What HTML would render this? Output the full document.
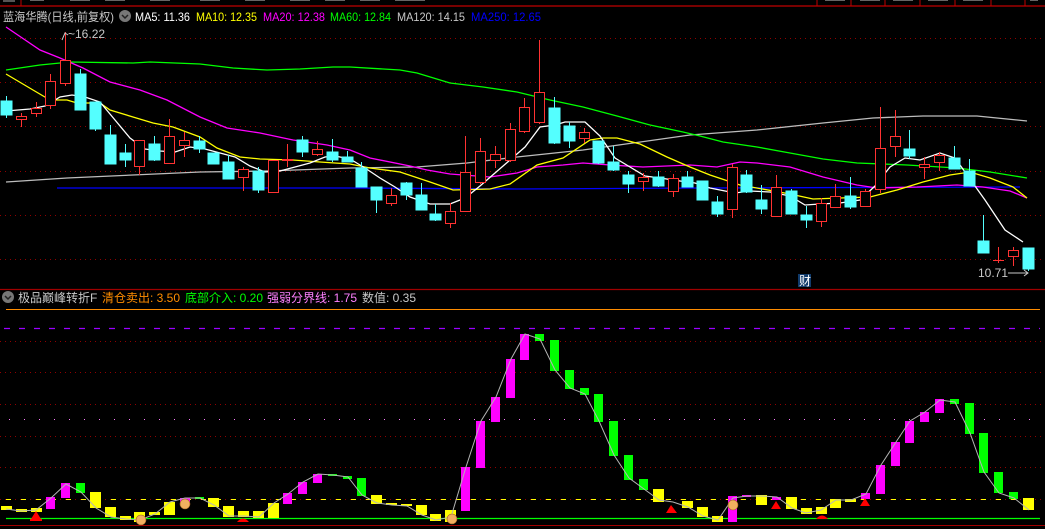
<!DOCTYPE html>
<html><head><meta charset="utf-8"><style>
html,body{margin:0;padding:0;background:#000;width:1045px;height:529px;overflow:hidden}
svg{display:block}
text{font-family:"Liberation Sans","Noto Sans CJK SC",sans-serif;font-size:12px}
</style></head><body>
<svg width="1045" height="529" xmlns="http://www.w3.org/2000/svg">
<rect width="1045" height="529" fill="#000"/>
<!-- top strip -->
<line x1="0" y1="6" x2="1045" y2="6" stroke="#c00000" stroke-width="1.2"/>
<line x1="21" y1="0" x2="21" y2="6" stroke="#c00000"/>
<rect x="3" y="0" width="12" height="2" fill="#555"/>
<g fill="#666"><rect x="30" y="0" width="14" height="1"/><rect x="70" y="0" width="20" height="1"/><rect x="105" y="0" width="20" height="1"/><rect x="150" y="0" width="20" height="1"/><rect x="200" y="0" width="20" height="1"/><rect x="245" y="0" width="20" height="1"/><rect x="290" y="0" width="20" height="1"/><rect x="325" y="0" width="20" height="1"/><rect x="360" y="0" width="20" height="1"/><rect x="395" y="0" width="30" height="1"/><rect x="825" y="0" width="20" height="1"/><rect x="860" y="0" width="20" height="1"/><rect x="893" y="0" width="20" height="1"/><rect x="928" y="0" width="20" height="1"/><rect x="963" y="0" width="20" height="1"/><rect x="1030" y="0" width="8" height="1"/></g>
<g stroke="#c00000"><line x1="817" y1="0" x2="817" y2="6"/><line x1="851" y1="0" x2="851" y2="6"/><line x1="885" y1="0" x2="885" y2="6"/><line x1="920" y1="0" x2="920" y2="6"/><line x1="955" y1="0" x2="955" y2="6"/><line x1="991" y1="0" x2="991" y2="6"/><line x1="1025" y1="0" x2="1025" y2="6"/></g>
<!-- header -->
<text x="3" y="21" fill="#c8c8c8" textLength="111" lengthAdjust="spacingAndGlyphs">蓝海华腾(日线,前复权)</text>
<circle cx="125" cy="16" r="6" fill="#777"/><path d="M122 15 l3 3 l3 -3" stroke="#222" stroke-width="1.5" fill="none"/>
<text x="135" y="21" fill="#fff" textLength="55" lengthAdjust="spacingAndGlyphs">MA5: 11.36</text>
<text x="196" y="21" fill="#ffff00" textLength="61" lengthAdjust="spacingAndGlyphs">MA10: 12.35</text>
<text x="263" y="21" fill="#ff00ff" textLength="62" lengthAdjust="spacingAndGlyphs">MA20: 12.38</text>
<text x="330" y="21" fill="#00ff00" textLength="61" lengthAdjust="spacingAndGlyphs">MA60: 12.84</text>
<text x="397" y="21" fill="#c8c8c8" textLength="68" lengthAdjust="spacingAndGlyphs">MA120: 14.15</text>
<text x="471" y="21" fill="#0000ff" textLength="70" lengthAdjust="spacingAndGlyphs">MA250: 12.65</text>
<!-- grid -->
<g stroke="#900000" stroke-dasharray="1,4">
<line x1="0" y1="38.5" x2="1045" y2="38.5"/><line x1="0" y1="82.5" x2="1045" y2="82.5"/><line x1="0" y1="126.5" x2="1045" y2="126.5"/><line x1="0" y1="171.5" x2="1045" y2="171.5"/><line x1="0" y1="215.5" x2="1045" y2="215.5"/><line x1="0" y1="259.5" x2="1045" y2="259.5"/>
</g>
<!-- MA lines -->
<g fill="none" stroke-width="1.3">
<polyline stroke="#0000ff" points="57,188 350,188 517,189 700,188 1020,187"/>
<polyline stroke="#bdbdbd" points="6,182 67,178 133,175 200,172 267,171 350,168 417,167 467,163 517,157 583,150 633,143 690,135 757,130 823,123 873,118 923,116 977,116 1027,121"/>
<polyline stroke="#00ff00" points="6,70 40,65 70,62 133,63 150,62 200,64 233,68 267,70 300,69 333,67 350,67 400,70 417,73 450,83 483,87 517,92 550,100 583,107 617,116 650,125 683,132 700,136 723,142 757,147 790,153 823,159 857,163 907,165 957,168 990,172 1027,178"/>
<polyline stroke="#ff00ff" points="6,27 40,50 60,58 83,68 110,82 140,90 167,100 200,117 227,128 260,133 293,140 327,145 350,150 370,158 410,166 427,170 450,174 490,177 517,173 537,167 563,165 583,163 610,165 643,167 690,165 717,167 740,162 757,163 790,167 823,177 857,185 877,188 917,187 957,185 983,187 1010,191 1027,198"/>
<polyline stroke="#ffff00" points="6,74 33,90 50,100 67,100 77,103 100,103 110,110 133,117 153,123 173,127 200,137 217,148 240,157 260,159 293,160 320,162 350,164 370,168 400,172 430,182 453,190 490,189 510,184 537,165 563,158 590,140 603,138 617,138 640,144 667,157 690,167 710,175 740,185 790,194 813,199 840,198 870,197 897,190 923,182 950,175 970,172 990,178 1013,187 1027,198"/>
<polyline stroke="#ffffff" points="6,111 30,109 45,106 60,97 72,95 85,97 100,102 115,120 130,138 145,149 160,151 175,152 190,147 205,149 220,153 235,157 250,166 265,172 280,171 295,167 310,163 325,157 335,156 350,159 365,168 380,178 395,187 410,197 430,204 450,204 465,198 480,186 495,173 510,160 525,147 540,127 555,125 565,122 585,122 600,136 615,158 630,167 645,176 660,178 680,181 695,183 710,188 720,190 735,193 750,191 770,192 790,196 805,205 820,204 840,203 860,200 875,186 890,167 905,158 920,160 940,153 955,158 965,172 985,200 1005,230 1023,242"/>
</g>
<!-- candles: cyan -->
<g fill="#54ffff" stroke="#54ffff">
<line x1="6.5" y1="96" x2="6.5" y2="118"/><rect x="1" y="101" width="11" height="14"/>
<line x1="80.5" y1="69" x2="80.5" y2="110"/><rect x="75" y="74" width="11" height="36"/>
<line x1="95.5" y1="102" x2="95.5" y2="131"/><rect x="90" y="102" width="11" height="27"/>
<line x1="110.5" y1="125" x2="110.5" y2="164"/><rect x="105" y="135" width="11" height="29"/>
<line x1="125.5" y1="144" x2="125.5" y2="167"/><rect x="120" y="153" width="11" height="7"/>
<line x1="154.5" y1="136" x2="154.5" y2="161"/><rect x="149" y="144" width="11" height="16"/>
<line x1="199.5" y1="136" x2="199.5" y2="153"/><rect x="194" y="141" width="11" height="8"/>
<line x1="213.5" y1="153" x2="213.5" y2="164"/><rect x="208" y="153" width="11" height="11"/>
<line x1="228.5" y1="155" x2="228.5" y2="179"/><rect x="223" y="162" width="11" height="17"/>
<line x1="258.5" y1="167" x2="258.5" y2="193"/><rect x="253" y="171" width="11" height="19"/>
<line x1="302.5" y1="136" x2="302.5" y2="157"/><rect x="297" y="140" width="11" height="12"/>
<line x1="332.5" y1="139" x2="332.5" y2="162"/><rect x="327" y="152" width="11" height="8"/>
<line x1="347.5" y1="151" x2="347.5" y2="162"/><rect x="342" y="157" width="11" height="5"/>
<line x1="361.5" y1="162" x2="361.5" y2="187"/><rect x="356" y="168" width="11" height="19"/>
<line x1="376.5" y1="187" x2="376.5" y2="213"/><rect x="371" y="187" width="11" height="13"/>
<line x1="406.5" y1="182" x2="406.5" y2="200"/><rect x="401" y="183" width="11" height="12"/>
<line x1="421.5" y1="183" x2="421.5" y2="210"/><rect x="416" y="195" width="11" height="15"/>
<line x1="435.5" y1="204" x2="435.5" y2="221"/><rect x="430" y="214" width="11" height="6"/>
<line x1="554.5" y1="97" x2="554.5" y2="144"/><rect x="549" y="108" width="11" height="35"/>
<line x1="569.5" y1="122" x2="569.5" y2="148"/><rect x="564" y="126" width="11" height="15"/>
<line x1="598.5" y1="141" x2="598.5" y2="164"/><rect x="593" y="141" width="11" height="22"/>
<line x1="613.5" y1="146" x2="613.5" y2="171"/><rect x="608" y="162" width="11" height="8"/>
<line x1="628.5" y1="171" x2="628.5" y2="193"/><rect x="623" y="175" width="11" height="9"/>
<line x1="658.5" y1="171" x2="658.5" y2="187"/><rect x="653" y="177" width="11" height="9"/>
<line x1="687.5" y1="171" x2="687.5" y2="187"/><rect x="682" y="177" width="11" height="10"/>
<line x1="702.5" y1="181" x2="702.5" y2="200"/><rect x="697" y="181" width="11" height="19"/>
<line x1="717.5" y1="196" x2="717.5" y2="217"/><rect x="712" y="202" width="11" height="12"/>
<line x1="746.5" y1="170" x2="746.5" y2="193"/><rect x="741" y="175" width="11" height="17"/>
<line x1="761.5" y1="185" x2="761.5" y2="214"/><rect x="756" y="200" width="11" height="9"/>
<line x1="791.5" y1="189" x2="791.5" y2="214"/><rect x="786" y="191" width="11" height="23"/>
<line x1="806.5" y1="206" x2="806.5" y2="228"/><rect x="801" y="215" width="11" height="5"/>
<line x1="850.5" y1="177" x2="850.5" y2="209"/><rect x="845" y="196" width="11" height="11"/>
<line x1="909.5" y1="130" x2="909.5" y2="159"/><rect x="904" y="149" width="11" height="7"/>
<line x1="954.5" y1="146" x2="954.5" y2="169"/><rect x="949" y="158" width="11" height="11"/>
<line x1="969.5" y1="159" x2="969.5" y2="186"/><rect x="964" y="171" width="11" height="15"/>
<line x1="983.5" y1="215" x2="983.5" y2="253"/><rect x="978" y="241" width="11" height="12"/>
<line x1="1028.5" y1="248" x2="1028.5" y2="271"/><rect x="1023" y="248" width="11" height="21"/>
</g>
<!-- candles: red hollow -->
<g fill="#000" stroke="#ff3232" stroke-width="1">
<line x1="21.5" y1="113" x2="21.5" y2="127"/><rect x="16.5" y="116.5" width="10" height="3"/>
<line x1="36.5" y1="102" x2="36.5" y2="117"/><rect x="31.5" y="108.5" width="10" height="5"/>
<line x1="50.5" y1="74" x2="50.5" y2="109"/><rect x="45.5" y="81.5" width="10" height="24"/>
<line x1="65.5" y1="32" x2="65.5" y2="86"/><rect x="60.5" y="60.5" width="10" height="23"/>
<line x1="139.5" y1="140" x2="139.5" y2="175"/><rect x="134.5" y="140.5" width="10" height="26"/>
<line x1="169.5" y1="119" x2="169.5" y2="163"/><rect x="164.5" y="136.5" width="10" height="27"/>
<line x1="184.5" y1="132" x2="184.5" y2="157"/><rect x="179.5" y="140.5" width="10" height="5"/>
<line x1="243.5" y1="167" x2="243.5" y2="191"/><rect x="238.5" y="169.5" width="10" height="8"/>
<line x1="273.5" y1="160" x2="273.5" y2="193"/><rect x="268.5" y="160.5" width="10" height="32"/>
<line x1="287.5" y1="144" x2="287.5" y2="167"/><rect x="282.5" y="159.5" width="10" height="1"/>
<line x1="317.5" y1="141" x2="317.5" y2="156"/><rect x="312.5" y="149.5" width="10" height="5"/>
<line x1="391.5" y1="188" x2="391.5" y2="206"/><rect x="386.5" y="195.5" width="10" height="8"/>
<line x1="450.5" y1="203" x2="450.5" y2="228"/><rect x="445.5" y="211.5" width="10" height="12"/>
<line x1="465.5" y1="136" x2="465.5" y2="211"/><rect x="460.5" y="172.5" width="10" height="39"/>
<line x1="480.5" y1="138" x2="480.5" y2="184"/><rect x="475.5" y="151.5" width="10" height="31"/>
<line x1="495.5" y1="146" x2="495.5" y2="168"/><rect x="490.5" y="154.5" width="10" height="6"/>
<line x1="510.5" y1="123" x2="510.5" y2="162"/><rect x="505.5" y="129.5" width="10" height="31"/>
<line x1="524.5" y1="98" x2="524.5" y2="133"/><rect x="519.5" y="107.5" width="10" height="24"/>
<line x1="539.5" y1="40" x2="539.5" y2="124"/><rect x="534.5" y="92.5" width="10" height="30"/>
<line x1="584.5" y1="128" x2="584.5" y2="143"/><rect x="579.5" y="132.5" width="10" height="6"/>
<line x1="643.5" y1="173" x2="643.5" y2="191"/><rect x="638.5" y="177.5" width="10" height="4"/>
<line x1="673.5" y1="174" x2="673.5" y2="197"/><rect x="668.5" y="178.5" width="10" height="13"/>
<line x1="732.5" y1="164" x2="732.5" y2="218"/><rect x="727.5" y="167.5" width="10" height="42"/>
<line x1="776.5" y1="175" x2="776.5" y2="216"/><rect x="771.5" y="187.5" width="10" height="29"/>
<line x1="821.5" y1="198" x2="821.5" y2="227"/><rect x="816.5" y="203.5" width="10" height="18"/>
<line x1="835.5" y1="184" x2="835.5" y2="207"/><rect x="830.5" y="196.5" width="10" height="11"/>
<line x1="865.5" y1="189" x2="865.5" y2="206"/><rect x="860.5" y="191.5" width="10" height="15"/>
<line x1="880.5" y1="107" x2="880.5" y2="193"/><rect x="875.5" y="148.5" width="10" height="41"/>
<line x1="895.5" y1="110" x2="895.5" y2="157"/><rect x="890.5" y="136.5" width="10" height="10"/>
<line x1="924.5" y1="157" x2="924.5" y2="179"/><rect x="919.5" y="164.5" width="10" height="3"/>
<line x1="939.5" y1="152" x2="939.5" y2="171"/><rect x="934.5" y="155.5" width="10" height="7"/>
<line x1="998.5" y1="247" x2="998.5" y2="263"/><line x1="993" y1="260.5" x2="1004" y2="260.5"/>
<line x1="1013.5" y1="247" x2="1013.5" y2="266"/><rect x="1008.5" y="250.5" width="10" height="6"/>
</g>
<!-- labels -->
<path d="M62 40 l3 -7 l3 2" stroke="#c8c8c8" fill="none"/>
<text x="68" y="38" fill="#c8c8c8">~16.22</text>
<text x="978" y="277" fill="#c8c8c8">10.71</text>
<path d="M1008 273 h20 m-4 -3 l4 3 l-4 3" stroke="#c8c8c8" fill="none"/>
<rect x="798" y="274" width="13" height="13" fill="#103a6a"/>
<text x="799" y="285" fill="#fff" font-size="11">财</text>
<!-- divider -->
<line x1="0" y1="289.5" x2="1045" y2="289.5" stroke="#a00000" stroke-width="1.2"/>
<!-- lower header -->
<circle cx="8" cy="297" r="6" fill="#777"/><path d="M5 296 l3 3 l3 -3" stroke="#222" stroke-width="1.5" fill="none"/>
<text x="18" y="302" fill="#c8c8c8">极品巅峰转折F</text>
<text x="102" y="302" fill="#ff8c00">清仓卖出: 3.50</text>
<text x="185" y="302" fill="#00ff00">底部介入: 0.20</text>
<text x="267" y="302" fill="#ff80ff">强弱分界线: 1.75</text>
<text x="362" y="302" fill="#c8c8c8">数值: 0.35</text>
<line x1="6" y1="309.5" x2="1040" y2="309.5" stroke="#ff8c00"/>
<line x1="4" y1="328.5" x2="1040" y2="328.5" stroke="#9900ff" stroke-width="1.3" stroke-dasharray="6,9"/>
<g stroke="#900000" stroke-dasharray="1,4">
<line x1="0" y1="341.5" x2="1045" y2="341.5"/><line x1="0" y1="372.5" x2="1045" y2="372.5"/><line x1="0" y1="404.5" x2="1045" y2="404.5"/><line x1="0" y1="436.5" x2="1045" y2="436.5"/><line x1="0" y1="467.5" x2="1045" y2="467.5"/><line x1="0" y1="499.5" x2="1045" y2="499.5"/>
</g>
<line x1="9" y1="419.5" x2="1040" y2="419.5" stroke="#ff80ff" stroke-dasharray="1,14"/>
<line x1="6" y1="499.5" x2="1040" y2="499.5" stroke="#ffff00" stroke-dasharray="5,10"/>
<line x1="6" y1="518.5" x2="1040" y2="518.5" stroke="#00ff00" stroke-width="1.3"/>
<line x1="0" y1="525.5" x2="1045" y2="525.5" stroke="#a00000"/>
<!-- bars yellow -->
<g fill="#ffff00">
<rect x="1" y="506" width="11" height="4"/><rect x="16" y="509" width="11" height="3"/><rect x="31" y="508" width="11" height="4"/>
<rect x="90" y="492" width="11" height="16"/><rect x="105" y="507" width="11" height="10"/><rect x="120" y="516" width="11" height="4"/>
<rect x="134" y="512" width="11" height="10"/><rect x="149" y="512" width="11" height="3"/><rect x="164" y="502" width="11" height="13"/>
<rect x="208" y="498" width="11" height="9"/><rect x="223" y="506" width="11" height="11"/><rect x="238" y="511" width="11" height="6"/>
<rect x="253" y="511" width="11" height="7"/><rect x="268" y="503" width="11" height="15"/>
<rect x="371" y="495" width="11" height="9"/><rect x="386" y="503" width="11" height="2"/><rect x="401" y="504" width="11" height="2"/>
<rect x="416" y="505" width="11" height="10"/><rect x="430" y="514" width="11" height="7"/><rect x="445" y="510" width="11" height="12"/>
<rect x="653" y="489" width="11" height="13"/><rect x="682" y="501" width="11" height="7"/><rect x="697" y="507" width="11" height="10"/>
<rect x="712" y="516" width="11" height="6"/><rect x="756" y="495" width="11" height="10"/><rect x="786" y="497" width="11" height="12"/>
<rect x="801" y="508" width="11" height="6"/><rect x="816" y="507" width="11" height="7"/><rect x="830" y="499" width="11" height="9"/>
<rect x="845" y="499" width="11" height="3"/><rect x="1023" y="498" width="11" height="12"/>
</g>
<g fill="#ff00ff">
<rect x="46" y="497" width="9" height="12"/><rect x="61" y="483" width="9" height="15"/>
<rect x="180" y="498" width="10" height="4"/>
<rect x="283" y="493" width="9" height="11"/><rect x="298" y="482" width="9" height="12"/><rect x="313" y="474" width="9" height="9"/>
<rect x="461" y="467" width="9" height="44"/><rect x="476" y="421" width="9" height="47"/><rect x="491" y="397" width="9" height="25"/>
<rect x="506" y="359" width="9" height="39"/><rect x="520" y="334" width="9" height="26"/>
<rect x="728" y="496" width="9" height="26"/><rect x="742" y="495" width="9" height="2"/><rect x="772" y="497" width="9" height="3"/>
<rect x="861" y="493" width="9" height="6"/><rect x="876" y="465" width="9" height="29"/><rect x="891" y="442" width="9" height="24"/>
<rect x="905" y="421" width="9" height="22"/><rect x="920" y="412" width="9" height="10"/><rect x="935" y="399" width="9" height="14"/>
</g>
<g fill="#00ff00">
<rect x="76" y="483" width="9" height="10"/><rect x="195" y="497" width="9" height="2"/>
<rect x="328" y="474" width="9" height="2"/><rect x="343" y="476" width="9" height="3"/><rect x="357" y="478" width="9" height="18"/>
<rect x="535" y="334" width="9" height="7"/><rect x="550" y="340" width="9" height="31"/><rect x="565" y="370" width="9" height="19"/>
<rect x="580" y="388" width="9" height="7"/><rect x="594" y="394" width="9" height="28"/><rect x="609" y="421" width="9" height="35"/>
<rect x="624" y="455" width="9" height="25"/><rect x="639" y="479" width="9" height="11"/>
<rect x="950" y="399" width="9" height="5"/><rect x="965" y="403" width="9" height="31"/><rect x="979" y="433" width="9" height="40"/>
<rect x="994" y="472" width="9" height="21"/><rect x="1009" y="492" width="9" height="7"/>
</g>
<polyline fill="none" stroke="#b4b4b4" stroke-width="1" points="6,509 21,511 36,510 51,498 66,484 81,492 96,508 111,517 126,519 140,520 155,514 170,502 185,498 200,498 214,505 229,516 244,516 259,517 274,503 288,494 303,482 318,474 333,475 348,477 362,495 377,503 392,505 407,506 422,515 436,520 451,517 466,467 481,421 496,397 511,359 525,334 540,339 555,370 570,388 585,394 599,421 614,455 629,478 644,489 659,500 673,502 688,507 703,516 718,520 733,498 747,496 762,496 777,497 792,508 806,513 821,510 836,500 851,500 866,494 881,465 896,442 910,421 925,412 940,400 955,402 970,433 984,472 999,493 1014,498 1029,510"/>
<!-- red markers -->
<g fill="#ff0000">
<path d="M31 519 l5 -8 l5 8 z"/><rect x="30" y="519" width="12" height="2"/>
<path d="M237 522 q6 -7 12 0 z"/>
<path d="M666 513 l5 -8 l6 8 z"/>
<path d="M771 509 l5 -8 l5 8 z"/>
<path d="M816 519 q6 -7 12 0 z"/>
<path d="M860 506 l5 -8 l5 8 z"/>
</g>
<!-- hand icons -->
<g fill="#f0b060" stroke="#a06020" stroke-width="0.6">
<circle cx="141" cy="520" r="5"/><circle cx="185" cy="504" r="5"/><circle cx="452" cy="519" r="5"/><circle cx="733" cy="505" r="5"/>
</g>
</svg>
</body></html>
